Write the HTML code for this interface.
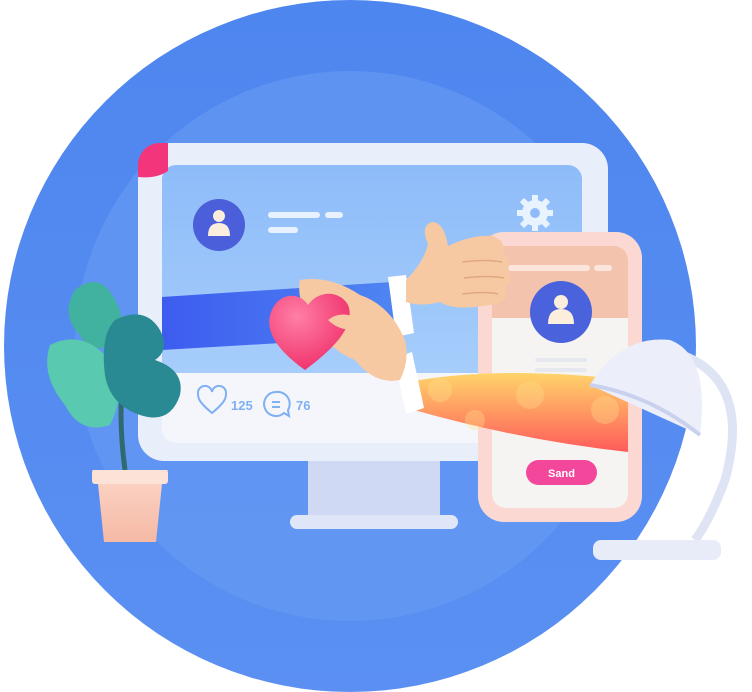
<!DOCTYPE html>
<html><head><style>
html,body{margin:0;padding:0;background:#fff;width:752px;height:692px;overflow:hidden}
text{font-family:"Liberation Sans",sans-serif;font-weight:bold}
</style></head><body>
<svg width="752" height="692" viewBox="0 0 752 692" xmlns="http://www.w3.org/2000/svg">
<defs>
<linearGradient id="bg" x1="0" y1="0" x2="0" y2="1"><stop offset="0" stop-color="#4e86ef"/><stop offset="1" stop-color="#5b90f2"/></linearGradient>
<linearGradient id="scr" x1="0" y1="0" x2="0" y2="1"><stop offset="0" stop-color="#8ebcf9"/><stop offset="1" stop-color="#a6cdfb"/></linearGradient>
<linearGradient id="blue" x1="0" y1="0" x2="1" y2="0"><stop offset="0" stop-color="#3d5cf0"/><stop offset="1" stop-color="#4f86f2"/></linearGradient>
<linearGradient id="orng" x1="0" y1="0" x2="0" y2="1"><stop offset="0" stop-color="#ffd46a"/><stop offset="1" stop-color="#ff5b5a"/></linearGradient>
<linearGradient id="pot" x1="0" y1="0" x2="0" y2="1"><stop offset="0" stop-color="#fbd6c8"/><stop offset="1" stop-color="#f6b9a5"/></linearGradient>
<radialGradient id="heart" cx="0.35" cy="0.3" r="0.8"><stop offset="0" stop-color="#ff7fa5"/><stop offset="1" stop-color="#ee2a67"/></radialGradient>
</defs>
<circle cx="350" cy="346" r="346" fill="url(#bg)"/>
<circle cx="350" cy="346" r="275" fill="#6a9df4" opacity="0.55"/>
<rect x="308" y="455" width="132" height="62" fill="#cfd9f3"/>
<rect x="290" y="515" width="168" height="14" rx="7" fill="#dfe6f8"/>
<rect x="138" y="143" width="470" height="318" rx="26" fill="#e9eefb"/>
<rect x="162" y="165" width="420" height="278" rx="14" fill="#f4f6fc"/>
<path d="M176 165 H568 a14 14 0 0 1 14 14 V373 H162 V179 a14 14 0 0 1 14 -14Z" fill="url(#scr)"/>
<path d="M138 165 a22 22 0 0 1 22 -22 h8 v28 q-12 8 -30 6Z" fill="#f3357c"/>
<circle cx="219" cy="225" r="26" fill="#4a5fd9"/>
<circle cx="219" cy="216" r="6" fill="#fbeedd"/><path d="M208 236 q0 -13 11 -13 q11 0 11 13Z" fill="#fbeedd"/>
<rect x="268" y="212" width="52" height="6" rx="3" fill="#e8f1ff"/><rect x="325" y="212" width="18" height="6" rx="3" fill="#e8f1ff"/>
<rect x="268" y="227" width="30" height="6" rx="3" fill="#e8f1ff"/>
<circle cx="535" cy="213" r="13" fill="#e9f2ff"/>
<g stroke="#e9f2ff" stroke-width="6"><line x1="535" y1="195" x2="535" y2="231"/><line x1="517" y1="213" x2="553" y2="213"/><line x1="522" y1="200" x2="548" y2="226"/><line x1="548" y1="200" x2="522" y2="226"/></g>
<circle cx="535" cy="213" r="5" fill="#8fbcf8"/>
<path d="M212 413 c-12 -10 -14 -14 -14 -19 a7 7 0 0 1 14 -2 a7 7 0 0 1 14 2 c0 5 -2 9 -14 19Z" fill="none" stroke="#7fb0f3" stroke-width="2"/>
<text x="231" y="410" font-size="13" fill="#7fb0f3">125</text>
<path d="M276 392 a12 12 0 1 0 8 21 l5 3 -1 -6 a12 12 0 0 0 -12 -18Z" fill="none" stroke="#7fb0f3" stroke-width="2"/>
<line x1="272" y1="402" x2="280" y2="402" stroke="#7fb0f3" stroke-width="2"/><line x1="272" y1="407" x2="280" y2="407" stroke="#7fb0f3" stroke-width="2"/>
<text x="296" y="410" font-size="13" fill="#7fb0f3">76</text>
<!-- phone -->
<rect x="478" y="232" width="164" height="290" rx="26" fill="#fbd9d2"/>
<rect x="492" y="246" width="136" height="262" rx="14" fill="#f6f4f3"/>
<path d="M506 246 H614 a14 14 0 0 1 14 14 V318 H492 V260 a14 14 0 0 1 14 -14Z" fill="#f3c3ae"/>
<rect x="508" y="265" width="82" height="6" rx="3" fill="#fbe5dc"/><rect x="594" y="265" width="18" height="6" rx="3" fill="#fbe5dc"/>
<circle cx="561" cy="312" r="31" fill="#4a62dc"/>
<circle cx="561" cy="302" r="7" fill="#fbeedd"/><path d="M548 324 q0 -15 13 -15 q13 0 13 15Z" fill="#fbeedd"/>
<rect x="535" y="358" width="52" height="4" rx="2" fill="#e6e8ef"/><rect x="535" y="368" width="52" height="4" rx="2" fill="#e6e8ef"/><rect x="548" y="378" width="26" height="4" rx="2" fill="#e6e8ef"/>
<rect x="526" y="460" width="71" height="25" rx="12.5" fill="#f2479a"/>
<text x="561.5" y="477" font-size="11" fill="#fff" text-anchor="middle">Sand</text>
<!-- blue arm -->
<path d="M162 297 L392 282 L400 336 L162 350Z" fill="url(#blue)"/>
<path d="M388 277 L406 275 L414 333 L396 337Z" fill="#fff"/>
<!-- thumbs up hand -->
<path d="M406 280 q18 -18 22 -36 q-8 -18 4 -22 q12 0 16 24 q25 -12 45 -10 q14 6 10 18 q10 6 4 18 q8 8 -2 16 q6 12 -10 16 q-40 8 -55 -2 q-20 5 -34 0Z" fill="#f6c9a2"/>
<g stroke="#e0a882" stroke-width="1.5" fill="none"><path d="M462 262 q25 -3 40 0"/><path d="M464 278 q25 -3 40 0"/><path d="M462 294 q25 -3 36 0"/></g>
<!-- orange arm -->
<path d="M408 382 Q500 365 628 380 L628 452 Q520 440 414 410Z" fill="url(#orng)"/>
<g fill="#ffe08a" opacity="0.35"><circle cx="440" cy="390" r="12"/><circle cx="530" cy="395" r="14"/><circle cx="605" cy="410" r="14"/><circle cx="475" cy="420" r="10"/></g>
<path d="M394 358 L412 352 L424 408 L406 414Z" fill="#fff"/>
<!-- hand holding heart -->
<path d="M300 280 q30 -5 60 15 q30 10 45 45 q5 20 -5 40 q-25 5 -45 -20 q-25 -10 -35 -30 q-25 -25 -20 -50Z" fill="#f6c9a2"/>
<path d="M305 370 C270 345 265 325 272 310 C280 292 300 292 308 305 C318 290 340 290 348 305 C356 325 335 348 305 370Z" fill="url(#heart)"/>
<path d="M328 320 q12 -10 30 -2 q10 10 -5 12 q-15 0 -25 -10Z" fill="#f6c9a2"/>
<!-- plant -->
<path d="M125 470 q-8 -60 0 -100" stroke="#2f6b6e" stroke-width="5" fill="none"/>
<path d="M75 290 q25 -20 40 10 q15 25 -5 45 q-20 10 -30 -10 q-20 -20 -5 -45Z" fill="#41b2a0"/>
<path d="M50 345 q30 -15 55 10 q25 30 5 70 q-30 10 -45 -20 q-25 -30 -15 -60Z" fill="#59c9b0"/>
<path d="M115 320 q30 -15 45 10 q10 20 -5 30 q30 10 25 35 q-10 30 -40 20 q-30 -10 -35 -40 q-5 -40 10 -55Z" fill="#2a8a94"/>
<path d="M92 470 h76 l-4 14 h-2 l-6 58 h-52 l-6 -58 h-2Z" fill="url(#pot)"/>
<rect x="92" y="470" width="76" height="14" rx="3" fill="#fde2d7"/>
<!-- lamp -->
<path d="M665 350 q90 20 60 130 q-15 40 -30 60" stroke="#dfe4f5" stroke-width="9" fill="none"/>
<path d="M590 385 q30 -50 80 -45 q40 15 30 95 Z" fill="#eceffa"/>
<path d="M590 385 q60 10 110 50" stroke="#c9d1ee" stroke-width="4" fill="none"/>
<rect x="593" y="540" width="128" height="20" rx="8" fill="#e8ecf9"/>
</svg>
</body></html>
